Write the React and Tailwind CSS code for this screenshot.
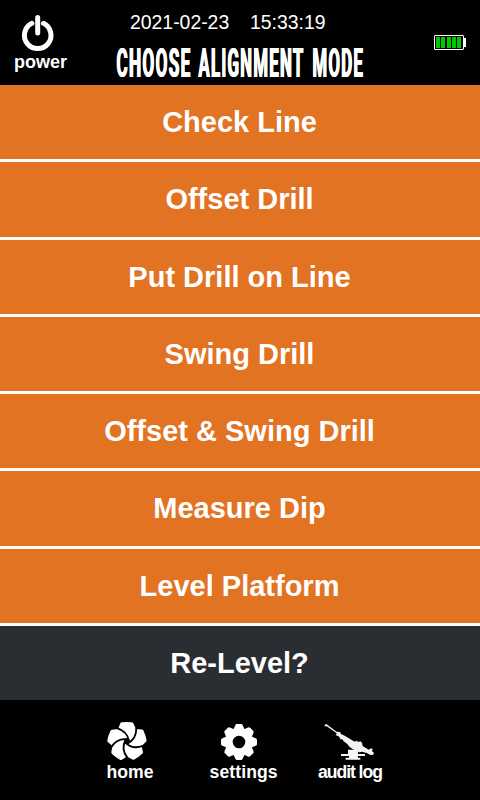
const MODES = [
  { label: 'Check Line', box: 'h-[74px] pt-[2px]' },
  { label: 'Offset Drill', box: 'h-[75px] pt-px' },
  { label: 'Put Drill on Line', box: 'h-[74px] pt-[2px]' },
  { label: 'Swing Drill', box: 'h-[74px] pt-[2px]' },
  { label: 'Offset & Swing Drill', box: 'h-[74px] pt-[2px]' },
  { label: 'Measure Dip', box: 'h-[75px] pt-px' },
  { label: 'Level Platform', box: 'h-[74px] pt-[2px]' },
];

const PETALS = [0, 72, 144, 216, 288];
const TEETH = [0, 45, 90, 135, 180, 225, 270, 315];

function PowerIcon() {
  return (
    <svg className="h-[38px] w-[36px]" viewBox="0 0 36 38" fill="none" stroke="white" strokeWidth="5" strokeLinecap="round">
      <path d="M11.9 9.3A13.3 13.3 0 1 0 23.5 9.3" />
      <path d="M17.7 3.5V19" />
    </svg>
  );
}

function Battery() {
  return (
    <div className="flex items-center">
      <div className="flex h-[15px] w-[30px] gap-[1.2px] rounded-[1px] border border-white p-px">
        {[0, 1, 2, 3, 4].map((n) => (
          <div key={n} className="w-[4.1px] bg-[#00c800]" />
        ))}
      </div>
      <div className="h-[9px] w-[2px] bg-white" />
    </div>
  );
}

function HomeIcon() {
  return (
    <svg className="h-[40px] w-[42px]" viewBox="-63 -61 126 120">
      {PETALS.map((a) => (
        <path
          key={a}
          transform={`rotate(${a})`}
          fill="white"
          d="M-27 -37L-20 -54Q-19 -57 -15 -57Q-1 -59 13 -57Q17 -57 19 -54L27 -37Q26 -8 0 7L7 4Q0 -27 -27 -37Z"
        />
      ))}
      {PETALS.map((a) => (
        <path key={a} transform={`rotate(${a})`} fill="none" stroke="black" strokeWidth="5.5" d="M28 -41Q29 -7 1 6" />
      ))}
      <circle r="9" fill="black" />
    </svg>
  );
}

function GearIcon() {
  return (
    <svg className="h-[38px] w-[38px]" viewBox="-19 -19 38 38" fill="white">
      {TEETH.map((a) => (
        <path key={a} transform={`rotate(${a})`} d="M-5.8 -12L-3.8 -16.6Q-3.3 -18 -2.3 -18H2.3Q3.3 -18 3.8 -16.6L5.8 -12Z" />
      ))}
      <circle r="10.2" fill="none" stroke="white" strokeWidth="7.8" />
    </svg>
  );
}

function DrillIcon() {
  return (
    <svg className="h-[38px] w-[52px]" viewBox="42 40 156 114" fill="#f4f4f4">
      <circle cx="48" cy="47" r="3.6" />
      <path d="M46 47L50 44L80 66L90 67L93 73L104 78L134 96L139 93L145 97L151 95L156 99L158 109L176 120L183 116L188 118L186 124L192 130L190 135L181 136L172 131L157 126L148 128L129 119L118 111L112 103L101 95L97 89L91 89L88 81L78 77L80 71L76 68Z" />
      <path d="M114 120H144V133H165V139H93V133H114Z" />
      <path d="M117 139H143L144 144H151V150H107V144H117Z" />
    </svg>
  );
}

function NavButton({ icon, label, box, labelClass }) {
  return (
    <button className={`flex flex-col items-start ${box}`}>
      {icon}
      <span className={`whitespace-nowrap text-[17.6px] leading-5 font-bold ${labelClass}`}>{label}</span>
    </button>
  );
}

export default function App() {
  return (
    <div className="flex h-[800px] w-[480px] flex-col overflow-hidden bg-black font-['Liberation_Sans',Arial,sans-serif] text-white">
      <header className="flex h-[85px] shrink-0">
        <button className="flex w-[116px] flex-col items-start pt-[14px] pl-[13px]">
          <span className="pl-[7px]"><PowerIcon /></span>
          <span className="pl-px text-[18px] leading-5 font-bold">power</span>
        </button>
        <div className="flex w-[248px] flex-col pt-[10px]">
          <div className="flex gap-[21px] pl-[14px] text-[19.4px] leading-6 whitespace-nowrap">
            <span className="w-[99px]">2021-02-23</span>
            <span>15:33:19</span>
          </div>
          <h1 className="flex h-[40px] pt-[10px] font-['Roboto','Liberation_Sans',sans-serif] text-[40px] leading-[40px] font-bold tracking-[3px] [text-shadow:1px_0_white,2px_0_white]">
            <span className="w-[81.5px] origin-left scale-x-[0.43]">CHOOSE</span>
            <span className="w-[114px] origin-left scale-x-[0.42]">ALIGNMENT</span>
            <span className="w-[50px] origin-left scale-x-[0.42]">MODE</span>
          </h1>
        </div>
        <div className="pt-[35px] pl-[70px]"><Battery /></div>
      </header>

      <main className="flex shrink-0 flex-col gap-[3px] bg-white text-[29px] font-bold">
        {MODES.map((mode) => (
          <button key={mode.label} className={`flex items-center justify-center bg-[#e27323] pr-px ${mode.box}`}>
            {mode.label}
          </button>
        ))}
        <button className="flex h-[74px] items-center justify-center bg-[#2a2d31] pt-[2px] pr-px">Re-Level?</button>
      </main>

      <nav className="flex h-[100px] shrink-0 pt-[21px] pl-[106px]">
        <NavButton box="w-[103px]" labelClass="pt-px pl-[0.5px]" label="home" icon={<HomeIcon />} />
        <NavButton box="w-[109px]" labelClass="pt-px pl-[0.5px] tracking-[0.1px]" label="settings" icon={<span className="pt-[2px] pl-[11px]"><GearIcon /></span>} />
        <NavButton box="w-[70px]" labelClass="pt-px tracking-[-1.05px]" label="audit log" icon={<span className="pt-[2px] pl-[6px]"><DrillIcon /></span>} />
      </nav>
    </div>
  );
}
